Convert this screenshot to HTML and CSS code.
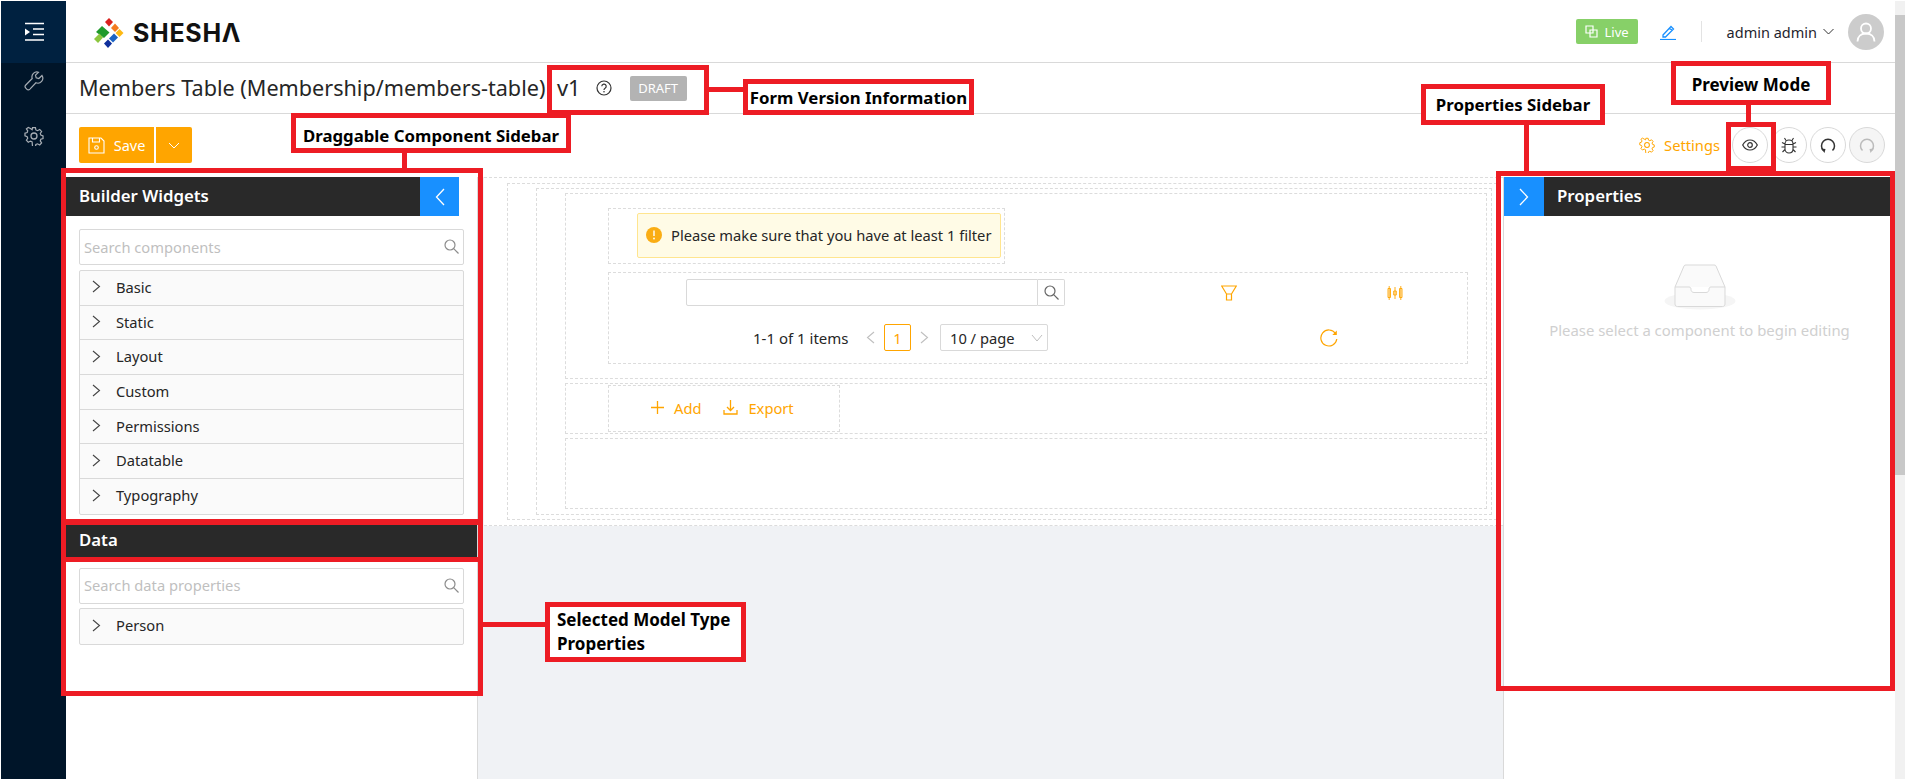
FILE: index.html
```html
<!DOCTYPE html>
<html>
<head>
	<meta charset="utf-8">
	<title>Members Table - Form Designer</title>
	<link rel="stylesheet" href="styles.css">
</head>
<body>
	<div class="app">
		<nav class="nav">
			<div class="nav-top">
				<svg width="22" height="20" viewBox="0 0 22 20"><path d="M2 1.500h19M10 7h11M10 12.500h11M2 18h19" stroke="#fff" stroke-width="1.700" fill="none"/><path d="M2 6.500l5 3.500-5 3.500z" fill="#fff"/></svg>
			</div>
			<div class="nav-item nav-tool">
				<svg width="20" height="20" viewBox="0 0 20 20"><path d="M18 4.500l-3.200 3-2.600-.7-.7-2.600 3-3a5 5 0 0 0-6.300 6.300L1.800 14a2.300 2.300 0 0 0 0 3.200l.9.900a2.300 2.300 0 0 0 3.200 0l6-6.300A5 5 0 0 0 18 4.500z" fill="none" stroke="#a6adb4" stroke-width="1.200"/></svg>
			</div>
			<div class="nav-item nav-gear">
				<svg width="20" height="20" viewBox="0 0 20 20"><use href="#gear" stroke="#a6adb4"/></svg>
			</div>
		</nav>

		<div class="main">
			<header class="header">
				<div class="logo">
					<svg width="30" height="30" viewBox="0 0 30 30">
						<path d="M15 0l4 4-4 4.500-4-4.500z" fill="#d9211d"/>
						<path d="M21 5.500l4 4.500-4 4-4-4z" fill="#f47a1f"/>
						<path d="M25.500 11l4 4-4 4-4-4z" fill="#fdb813"/>
						<path d="M20 15.500l4 4-5 5-4-4z" fill="#1c63c4"/>
						<path d="M14 21.500l4 4-4 4.500-4-4.500z" fill="#0f2f9c"/>
						<path d="M8 8l7.500 6.500L10 20l-8-6z" fill="#1f9a2b"/>
						<path d="M5.500 15.500l3.500 4-5 5.500-4-4z" fill="#8cc63f"/>
					</svg>
					<span class="logo-text">SHESHΛ</span>
				</div>
				<div class="header-right">
					<span class="live-tag">
						<svg width="13" height="13" viewBox="0 0 13 13"><path d="M1 1h7v7H1zM5 5h7v7H5z" fill="none" stroke="#fff" stroke-width="1.200"/></svg>
						Live
					</span>
					<svg class="edit-icon" width="16" height="16" viewBox="0 0 16 16"><path d="M3 11l8-8.500 2.500 2.500-8 8H3zM9.500 4l2.500 2.500" fill="none" stroke="#1890ff" stroke-width="1.300"/><path d="M0 15.500h16" stroke="#1890ff" stroke-width="1.200"/></svg>
					<span class="header-divider"></span>
					<span class="user-name">admin admin</span>
					<svg class="user-chevron" width="11" height="7" viewBox="0 0 11 7"><path d="M.5 1l5 5 5-5" fill="none" stroke="#333" stroke-width="1"/></svg>
					<span class="avatar">
						<svg width="20" height="20" viewBox="0 0 20 20"><circle cx="10" cy="6.500" r="5" fill="none" stroke="#fff" stroke-width="1.800"/><path d="M1.500 19.500c0-5 3.500-8 8.500-8s8.500 3 8.500 8" fill="none" stroke="#fff" stroke-width="1.800"/></svg>
					</span>
				</div>
			</header>

			<div class="title-row">
				<h1 class="form-title">Members Table (Membership/members-table)</h1>
				<span class="form-version">v1</span>
				<svg class="help-icon" width="16" height="16" viewBox="0 0 16 16"><circle cx="8" cy="8" r="7" fill="none" stroke="#333" stroke-width="1.200"/><path d="M5.800 6.300a2.200 2.200 0 1 1 3.300 1.900c-.7.400-1.100.8-1.100 1.700" fill="none" stroke="#333" stroke-width="1.200"/><circle cx="8" cy="11.800" r=".8" fill="#333"/></svg>
				<span class="draft-tag">DRAFT</span>
			</div>

			<div class="toolbar">
				<div class="save-group">
					<button class="save-btn">
						<svg width="17" height="17" viewBox="0 0 17 17"><path d="M1 1h12l3 3v12H1zM4.500 1v4h7V1" fill="none" stroke="#fff" stroke-width="1.100"/><circle cx="8.500" cy="10.500" r="1.800" fill="none" stroke="#fff" stroke-width="1.100"/></svg>
						Save
					</button>
					<button class="save-more">
						<svg width="12" height="7" viewBox="0 0 12 7"><path d="M1 1l5 5 5-5" fill="none" stroke="#fff" stroke-width="1"/></svg>
					</button>
				</div>
				<div class="toolbar-right">
					<span class="settings-link">
						<svg width="16" height="16" viewBox="0 0 20 20"><use href="#gear" stroke="#ffa500"/></svg>
						Settings
					</span>
					<span class="round-btn">
						<svg width="16" height="12" viewBox="0 0 16 12"><path d="M.7 6C2.500 2.500 5 1 8 1s5.500 1.500 7.300 5c-1.800 3.500-4.300 5-7.300 5S2.500 9.500.7 6z" fill="none" stroke="#333" stroke-width="1.200"/><circle cx="8" cy="6" r="2.300" fill="none" stroke="#333" stroke-width="1.200"/></svg>
					</span>
					<span class="round-btn">
						<svg width="16" height="17" viewBox="0 0 16 17"><path d="M4 7c0-2.500 1.800-4 4-4s4 1.500 4 4v5c0 2.500-1.800 4-4 4s-4-1.500-4-4zM4 7.500h8M5 3.500L3.500 1M11 3.500L12.500 1M4 7L1 5.500M12 7l3-1.500M4 10H.5M12 10h3.500M4 12.500L1.500 15M12 12.500l2.500 2.500" fill="none" stroke="#333" stroke-width="1.100"/></svg>
					</span>
					<span class="round-btn">
						<svg width="16" height="16" viewBox="0 0 16 16"><path d="M3.500 13.500A6.500 6.500 0 1 1 12.500 13.500" fill="none" stroke="#333" stroke-width="1.500"/><path d="M1 11.500l4.500 .5-1 4z" fill="#333"/></svg>
					</span>
					<span class="round-btn round-btn-off">
						<svg width="16" height="16" viewBox="0 0 16 16"><path d="M3.500 13.500A6.500 6.500 0 1 1 12.500 13.500" fill="none" stroke="#bbb" stroke-width="1.500"/><path d="M15 11.500l-4.500 .5 1 4z" fill="#bbb"/></svg>
					</span>
				</div>
			</div>

			<div class="designer">
				<aside class="left-panel">
					<div class="panel-head">
						<span class="panel-head-title">Builder Widgets</span>
						<span class="panel-toggle">
							<svg width="10" height="18" viewBox="0 0 10 18"><path d="M9 1L1.500 9 9 17" fill="none" stroke="#fff" stroke-width="1.300"/></svg>
						</span>
					</div>
					<div class="search-box">
						<span class="search-text">Search components</span>
						<svg width="15" height="15" viewBox="0 0 15 15"><use href="#search" stroke="#8c8c8c"/></svg>
					</div>
					<div class="collapse">
						<div class="collapse-row"><svg width="9" height="13" viewBox="0 0 9 13"><use href="#chev"/></svg>Basic</div>
						<div class="collapse-row"><svg width="9" height="13" viewBox="0 0 9 13"><use href="#chev"/></svg>Static</div>
						<div class="collapse-row"><svg width="9" height="13" viewBox="0 0 9 13"><use href="#chev"/></svg>Layout</div>
						<div class="collapse-row"><svg width="9" height="13" viewBox="0 0 9 13"><use href="#chev"/></svg>Custom</div>
						<div class="collapse-row"><svg width="9" height="13" viewBox="0 0 9 13"><use href="#chev"/></svg>Permissions</div>
						<div class="collapse-row"><svg width="9" height="13" viewBox="0 0 9 13"><use href="#chev"/></svg>Datatable</div>
						<div class="collapse-row"><svg width="9" height="13" viewBox="0 0 9 13"><use href="#chev"/></svg>Typography</div>
					</div>
					<div class="data-head">Data</div>
					<div class="search-box search-data">
						<span class="search-text">Search data properties</span>
						<svg width="15" height="15" viewBox="0 0 15 15"><use href="#search" stroke="#8c8c8c"/></svg>
					</div>
					<div class="collapse collapse-data">
						<div class="collapse-row"><svg width="9" height="13" viewBox="0 0 9 13"><use href="#chev"/></svg>Person</div>
					</div>
				</aside>

				<section class="canvas">
					<div class="canvas-page">
						<div class="dash box-a">
							<div class="dash box-b">
								<div class="dash box-c">
									<div class="dash alert-wrap">
										<div class="alert">
											<svg width="16" height="16" viewBox="0 0 16 16"><circle cx="8" cy="8" r="8" fill="#faad14"/><path d="M8 3.500v5.500" stroke="#fff" stroke-width="1.400"/><circle cx="8" cy="11.500" r=".9" fill="#fff"/></svg>
											Please make sure that you have at least 1 filter
										</div>
									</div>
									<div class="dash table-wrap">
										<div class="table-tools">
											<div class="table-search">
												<span class="table-search-input"></span>
												<span class="table-search-btn"><svg width="15" height="15" viewBox="0 0 15 15"><use href="#search" stroke="#666"/></svg></span>
											</div>
											<svg class="filter-icon" width="16" height="16" viewBox="0 0 16 16"><path d="M.7 1h14.600L10.500 9H5.500zM5.500 9h5v6h-5z" fill="none" stroke="#ffa500" stroke-width="1.200"/></svg>
											<svg class="columns-icon" width="16" height="16" viewBox="0 0 16 16"><path d="M1 3.500h2.500v9H1zM12.500 3.500H15v9h-2.500zM6.700 6h2.600v4H6.700zM2.200 1v14M13.800 1v14M8 2v12" fill="none" stroke="#ffa500" stroke-width=".9"/></svg>
										</div>
										<div class="pager">
											<span class="pager-total">1-1 of 1 items</span>
											<svg class="pager-arrow" width="9" height="13" viewBox="0 0 9 13"><path d="M8 1L1.500 6.500 8 12" fill="none" stroke="#bfbfbf" stroke-width="1.100"/></svg>
											<span class="pager-num">1</span>
											<svg class="pager-arrow" width="9" height="13" viewBox="0 0 9 13"><path d="M1 1l6.500 5.500L1 12" fill="none" stroke="#bfbfbf" stroke-width="1.100"/></svg>
											<span class="pager-size">10 / page
												<svg width="12" height="8" viewBox="0 0 12 8"><path d="M1 1l5 6 5-6" fill="none" stroke="#bfbfbf" stroke-width="1"/></svg>
											</span>
											<svg class="reload-icon" width="18" height="18" viewBox="0 0 18 18"><path d="M15.500 4.500A8 8 0 1 0 16.800 10" fill="none" stroke="#ffa500" stroke-width="1.200"/><path d="M16.800 1.500v4.500h-4.500z" fill="#ffa500"/></svg>
										</div>
									</div>
								</div>
								<div class="dash box-d">
									<div class="dash add-wrap">
										<span class="link-btn"><svg width="13" height="13" viewBox="0 0 13 13"><path d="M6.500 0v13M0 6.500h13" stroke="#ffa500" stroke-width="1.300"/></svg>Add</span>
										<span class="link-btn"><svg width="15" height="15" viewBox="0 0 15 15"><path d="M7.500 0v10M4 7l3.500 3.500L11 7M1 10v4h13v-4" fill="none" stroke="#ffa500" stroke-width="1.300"/></svg>Export</span>
									</div>
								</div>
								<div class="dash box-e"></div>
							</div>
						</div>
					</div>
				</section>

				<aside class="right-panel">
					<div class="panel-head panel-head-right">
						<span class="panel-toggle panel-toggle-right">
							<svg width="10" height="18" viewBox="0 0 10 18"><path d="M1 1l7.500 8L1 17" fill="none" stroke="#fff" stroke-width="1.300"/></svg>
						</span>
						<span class="panel-head-title">Properties</span>
					</div>
					<div class="empty">
						<svg width="72" height="46" viewBox="0 0 72 46">
							<ellipse cx="36" cy="37" rx="35.500" ry="8.500" fill="#f5f5f5"/>
							<path d="M11 23L20 2c.3-.8 1-1 2-1h28c1 0 1.700.2 2 1l9 21v17c0 1.500-1 2.500-2.500 2.500h-45C12 42.500 11 41.500 11 40z" fill="#fafafa" stroke="#d9d9d9" stroke-width="1"/>
							<path d="M11 23h14c1.500 0 2 1 2 2.500s1 3 3 3h12c2 0 3-1.500 3-3s.5-2.500 2-2.500h14" fill="#fff" stroke="#d9d9d9" stroke-width="1"/>
						</svg>
						<p class="empty-text">Please select a component to begin editing</p>
					</div>
				</aside>
			</div>
		</div>

		<div class="scrollbar">
			<span class="scroll-up"></span>
			<span class="scroll-thumb"></span>
		</div>
	</div>

	<!-- annotations drawn over the screenshot -->
	<div class="mark mark-version"></div>
	<div class="line line-version"></div>
	<div class="mark note note-version">Form Version Information</div>
	<div class="mark note note-drag">Draggable Component Sidebar</div>
	<div class="line line-drag"></div>
	<div class="mark mark-widgets"></div>
	<div class="mark mark-datahead"></div>
	<div class="mark mark-data"></div>
	<div class="line line-model"></div>
	<div class="mark note note-model">Selected Model Type<br>Properties</div>
	<div class="mark note note-props">Properties Sidebar</div>
	<div class="line line-props"></div>
	<div class="mark mark-props"></div>
	<div class="mark note note-preview">Preview Mode</div>
	<div class="line line-preview"></div>
	<div class="mark mark-preview"></div>

	<svg class="defs" width="0" height="0">
		<defs>
			<path id="chev" d="M1 1l6.500 5.500L1 12" fill="none" stroke="#444" stroke-width="1.100"/>
			<g id="search" fill="none" stroke-width="1.200"><circle cx="6" cy="6" r="5"/><path d="M9.700 9.700l4.800 4.800"/></g>
			<g id="gear" fill="none" stroke-width="1.300"><circle cx="10" cy="10" r="3"/><path d="M8.500 1h3l.5 2.600 1.700.8 2.300-1.300 2 2.300-1.400 2.200.6 1.800 2.300.8v3l-2.300.8-.6 1.800 1.400 2.200-2 2.300-2.300-1.300-1.700.8-.5 2.600h-3L8 16.800l-1.700-.8L4 17.300l-2-2.300 1.400-2.200-.6-1.800L.5 10.200v-3l2.300-.8.600-1.800L2 2.400 4 .8l2.300 1.300L8 3.300z" transform="translate(0.500 .7) scale(.95 .9)"/></g>
		</defs>
	</svg>
</body>
</html>
```

FILE: styles.css
```css
* {
	box-sizing: border-box;
}

html, body {
	margin: 0;
	height: 783px;
	overflow: hidden;
	background: #fff;
	font-family: "Noto Sans", "Open Sans", sans-serif;
	font-size: 14.7px;
	color: #262626;
}

.defs {
	position: absolute;
}

.app {
	display: flex;
	height: 778px;
	margin: 1px 0 4px 1px;
}

/* left nav */
.nav {
	width: 65px;
	flex-shrink: 0;
	background: #001529;
	display: flex;
	flex-direction: column;
	align-items: center;
}

.nav-top {
	width: 100%;
	height: 62px;
	background: #002140;
	display: flex;
	align-items: center;
	justify-content: center;
}

.nav-item {
	height: 20px;
	display: flex;
}

.nav-tool {
	margin-top: 8px;
}

.nav-gear {
	margin-top: 35px;
}

.main {
	flex: 1;
	min-width: 0;
	display: flex;
	flex-direction: column;
}

/* header */
.header {
	height: 62px;
	flex-shrink: 0;
	border-bottom: 1px solid #d9d9d9;
	display: flex;
	align-items: center;
	padding: 0 11px 0 28px;
}

.logo {
	display: flex;
	align-items: center;
	gap: 9px;
	margin-top: 3px;
}

.logo-text {
	font-family: Inter, sans-serif;
	font-weight: 700;
	font-size: 25px;
	letter-spacing: .7px;
	color: #111;
}

.header-right {
	margin-left: auto;
	display: flex;
	align-items: center;
}

.live-tag {
	width: 62px;
	height: 25px;
	background: #87d068;
	border-radius: 2px;
	color: #fff;
	font-size: 13px;
	display: flex;
	align-items: center;
	justify-content: center;
	gap: 7px;
}

.edit-icon {
	margin: 0 25px 0 22px;
}

.header-divider {
	width: 1px;
	height: 21px;
	background: #e3e3e3;
	margin-right: 25px;
}

.user-name {
	font-size: 14.500px;
	color: #1f1f2e;
}

.user-chevron {
	margin: 0 14px 0 6px;
}

.avatar {
	width: 36px;
	height: 36px;
	border-radius: 50%;
	background: #ccc;
	display: flex;
	align-items: center;
	justify-content: center;
}

/* title */
.title-row {
	height: 51px;
	flex-shrink: 0;
	border-bottom: 1px solid #d9d9d9;
	display: flex;
	align-items: center;
	padding: 0 0 2px 13px;
}

.form-title {
	margin: 0;
	width: 478px;
	font-size: 21.600px;
	font-weight: 400;
	color: #262626;
	white-space: nowrap;
}

.form-version {
	font-size: 21.900px;
}

.help-icon {
	margin: 2px 0 0 15px;
}

.draft-tag {
	width: 57px;
	height: 25px;
	margin: 2px 0 0 18px;
	background: #b3b3b3;
	border-radius: 2px;
	color: #fff;
	font-size: 13px;
	display: flex;
	align-items: center;
	justify-content: center;
}

/* toolbar */
.toolbar {
	height: 63px;
	flex-shrink: 0;
	display: flex;
	align-items: flex-start;
	padding: 13px 10px 0 13px;
}

.save-group {
	display: flex;
	gap: 2px;
}

.save-btn, .save-more {
	height: 36px;
	border: 0;
	background: #ffa500;
	color: #fff;
	font-family: inherit;
	font-size: 14.500px;
	display: flex;
	align-items: center;
	justify-content: center;
}

.save-btn {
	width: 75px;
	gap: 9px;
	border-radius: 2px 0 0 2px;
}

.save-more {
	width: 36px;
	border-radius: 0 2px 2px 0;
}

.toolbar-right {
	margin-left: auto;
	display: flex;
	align-items: center;
	gap: 3px;
}

.settings-link {
	color: #ffa500;
	display: flex;
	align-items: center;
	gap: 9px;
	margin-right: 9px;
}

.round-btn {
	width: 36px;
	height: 36px;
	border: 1px solid #d9d9d9;
	border-radius: 50%;
	display: flex;
	align-items: center;
	justify-content: center;
	background: #fff;
}

.round-btn-off {
	background: #f5f5f5;
}

/* designer */
.designer {
	flex: 1;
	display: flex;
	min-height: 0;
}

.left-panel {
	width: 412px;
	flex-shrink: 0;
	border-right: 1px solid #d9d9d9;
}

.panel-head {
	width: 393px;
	height: 39px;
	background: #292929;
	display: flex;
	align-items: center;
	justify-content: space-between;
	padding-left: 13px;
}

.panel-head-title {
	color: #fff;
	font-size: 16.800px;
	font-weight: 600;
	margin-bottom: 2px;
}

.panel-toggle {
	width: 39px;
	height: 39px;
	background: #1890ff;
	display: flex;
	align-items: center;
	justify-content: center;
}

.search-box {
	height: 36px;
	margin: 13px 13px 0;
	border: 1px solid #d9d9d9;
	border-radius: 2px;
	display: flex;
	align-items: center;
	justify-content: space-between;
	padding: 0 4px 1px;
}

.search-text {
	color: #bfbfbf;
}

.collapse {
	margin: 5px 13px 0;
	border: 1px solid #d9d9d9;
	border-radius: 2px;
	background: #fafafa;
}

.collapse-row {
	height: 34.700px;
	border-bottom: 1px solid #d9d9d9;
	display: flex;
	align-items: center;
	gap: 15px;
	padding: 0 0 2px 12px;
	color: #262626;
}

.collapse-row:last-child {
	border-bottom: 0;
}

.data-head {
	height: 32px;
	margin-top: 10px;
	background: #292929;
	color: #fff;
	font-size: 16.800px;
	font-weight: 600;
	display: flex;
	align-items: center;
	padding: 0 0 2px 13px;
}

.search-data {
	margin-top: 11px;
}

.collapse-data {
	margin-top: 4px;
}

.canvas {
	flex: 1;
	min-width: 0;
	background: #f0f2f5;
}

.canvas-page {
	height: 349px;
	margin-left: 6px;
	padding: 5px 5px 5px 23px;
	background: #fff;
	border: 1px dashed #dcdcdc;
	border-width: 1px 0;
}

.dash {
	border: 1px dashed #dcdcdc;
}

.box-a {
	height: 100%;
	padding: 4px 4px 4px 28px;
	margin-right: 1px;
}

.box-b {
	height: 100%;
	padding: 4px 4px 5px 28px;
	display: flex;
	flex-direction: column;
	gap: 4px;
}

.box-c {
	height: 186px;
	padding: 14px 18px 0 42px;
}

.alert-wrap {
	width: 397px;
	height: 56px;
	padding: 4px 3px 4px 28px;
}

.alert {
	height: 45px;
	background: #fffbe6;
	border: 1px solid #ffe58f;
	border-radius: 2px;
	display: flex;
	align-items: center;
	gap: 9px;
	padding: 0 0 2px 8px;
	white-space: nowrap;
}

.table-wrap {
	height: 92px;
	margin-top: 8px;
	padding: 6px 0 0 77px;
}

.table-tools {
	display: flex;
	align-items: center;
}

.table-search {
	width: 379px;
	height: 27px;
	display: flex;
}

.table-search-input {
	flex: 1;
	border: 1px solid #d9d9d9;
	border-radius: 2px 0 0 2px;
}

.table-search-btn {
	width: 27px;
	border: 1px solid #d9d9d9;
	border-left: 0;
	border-radius: 0 2px 2px 0;
	display: flex;
	align-items: center;
	justify-content: center;
}

.filter-icon {
	margin-left: 156px;
}

.columns-icon {
	margin-left: 150px;
}

.pager {
	display: flex;
	align-items: center;
	margin-top: 18px;
	padding-left: 67px;
}

.pager-total {
	width: 113px;
	font-size: 15px;
	white-space: nowrap;
}

.pager-arrow {
	flex-shrink: 0;
}

.pager-num {
	width: 27px;
	height: 27px;
	margin: 0 9px;
	border: 1px solid #ffa500;
	border-radius: 2px;
	color: #ffa500;
	display: flex;
	align-items: center;
	justify-content: center;
}

.pager-size {
	width: 108px;
	height: 27px;
	margin-left: 11px;
	border: 1px solid #d9d9d9;
	border-radius: 2px;
	display: flex;
	align-items: center;
	justify-content: space-between;
	padding: 0 4px 0 9px;
	white-space: nowrap;
}

.reload-icon {
	margin-left: 272px;
}

.box-d {
	height: 51px;
	padding: 1px 0 0 42px;
}

.add-wrap {
	width: 232px;
	height: 47px;
	display: flex;
	align-items: center;
	gap: 22px;
	padding: 0 0 2px 42px;
}

.link-btn {
	color: #ffa500;
	display: flex;
	align-items: center;
	gap: 10px;
}

.box-e {
	height: 71px;
}

.right-panel {
	width: 392px;
	flex-shrink: 0;
	border-left: 1px solid #d9d9d9;
}

.panel-head-right {
	width: 387px;
	padding-left: 0;
	justify-content: flex-start;
	gap: 13px;
}

.panel-toggle-right {
	width: 40px;
}

.empty {
	display: flex;
	flex-direction: column;
	align-items: center;
	padding: 48px 0 0;
}

.empty-text {
	margin: 10px 0 0;
	font-size: 14.900px;
	color: #d0d0d0;
	white-space: nowrap;
}

/* scrollbar */
.scrollbar {
	width: 10px;
	flex-shrink: 0;
	background: #f1f1f1;
	display: flex;
	flex-direction: column;
}

.scroll-up {
	height: 14px;
}

.scroll-thumb {
	height: 460px;
	background: #c8c8c8;
}

/* annotations */
.mark {
	position: absolute;
	border: 5px solid #ed1c24;
}

.line {
	position: absolute;
	background: #ed1c24;
}

.note {
	background: #fff;
	color: #000;
	font-size: 16.800px;
	font-weight: 700;
	display: flex;
	align-items: center;
	justify-content: center;
	white-space: nowrap;
}

.mark-version { left: 547px; top: 65px; width: 162px; height: 50px; }
.line-version { left: 709px; top: 87px; width: 34px; height: 5px; }
.note-version { left: 743px; top: 79px; width: 231px; height: 36px; }

.note-drag { left: 291px; top: 113px; width: 280px; height: 40px; padding-top: 5px; }
.line-drag { left: 402px; top: 153px; width: 5px; height: 15px; }
.mark-widgets { left: 61px; top: 168px; width: 422px; height: 356px; }
.mark-datahead { left: 61px; top: 520px; width: 422px; height: 42px; }
.mark-data { left: 61px; top: 557px; width: 422px; height: 139px; }
.line-model { left: 483px; top: 622px; width: 62px; height: 5px; }
.note-model { left: 545px; top: 602px; width: 201px; height: 60px; justify-content: flex-start; padding-left: 7px; line-height: 24px; font-size: 17px; }

.note-props { left: 1421px; top: 84px; width: 184px; height: 41px; }
.line-props { left: 1524px; top: 125px; width: 5px; height: 47px; }
.mark-props { left: 1496px; top: 171px; width: 399px; height: 520px; }
.note-preview { left: 1671px; top: 61px; width: 160px; height: 44px; padding-top: 3px; font-size: 17px; }
.line-preview { left: 1746px; top: 105px; width: 5px; height: 17px; }
.mark-preview { left: 1726px; top: 122px; width: 50px; height: 49px; }
```
